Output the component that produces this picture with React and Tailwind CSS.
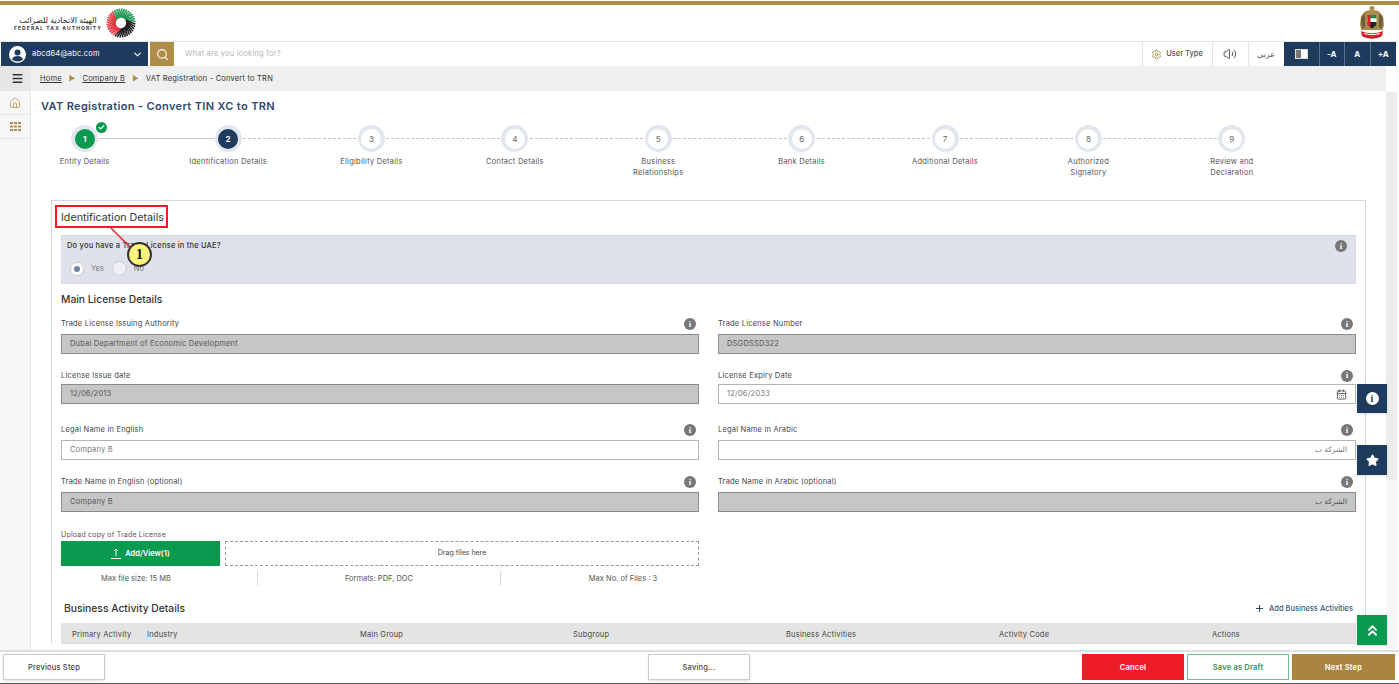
import { Search, ChevronDown, Menu, Home, Volume2, Star, ChevronsUp, Plus, CalendarDays, Check, Settings } from 'lucide-react';

const steps = [
  ['Entity Details'],
  ['Identification Details'],
  ['Eligibility Details'],
  ['Contact Details'],
  ['Business', 'Relationships'],
  ['Bank Details'],
  ['Additional Details'],
  ['Authorized', 'Signatory'],
  ['Review and', 'Declaration']
];

const columns = ['Primary Activity', 'Industry', 'Main Group', 'Subgroup', 'Business Activities', 'Activity Code', 'Actions'];

function InfoDot({ size = 12, className = '' }) {
  return (
    <span
      style={{ width: size, height: size, fontSize: size * 0.72 }}
      className={`flex items-center justify-center rounded-full bg-[#777] font-bold leading-none text-white font-['Liberation_Serif',serif] ${className}`}
    >
      i
    </span>
  );
}

function Logo() {
  // ring of slanted segments, green / black / red
  const seg = [];
  for (let i = 0; i < 36; i++) {
    const a = (i * 10 * Math.PI) / 180;
    const color = i < 9 || i >= 33 ? '#1b1b1b' : i < 21 ? '#e8343f' : '#1f9a55';
    seg.push(
      <line
        key={i}
        x1={15 + 5.5 * Math.cos(a)}
        y1={15 + 5.5 * Math.sin(a)}
        x2={15 + 14.5 * Math.cos(a + 0.6)}
        y2={15 + 14.5 * Math.sin(a + 0.6)}
        stroke={color}
        strokeWidth="1.5"
      />
    );
  }
  return (
    <svg width="30" height="30" viewBox="0 0 30 30">
      {seg}
    </svg>
  );
}

function Emblem() {
  return (
    <svg width="26" height="35" viewBox="0 0 26 35" className="-mt-[2px]">
      <path d="M13 1c1.500 0 2.500.8 2.800 2L14.500 5l5 1 4.500 5 1 9-1.500 5H2.500L1 20l1-9 4.500-5 5-1-1.300-2c.3-1.200 1.300-2 2.800-2z" fill="#a98c4b" />
      <path d="M2 13l4-5v14l-3 2zM24 13l-4-5v14l3 2z" fill="#6f5f3a" />
      <path d="M8.500 10h9v10l-4.500 4-4.500-4z" fill="#fff" />
      <path d="M8.500 10h9v3.300h-9z" fill="#1f8a4c" />
      <path d="M8.500 17h9v3l-4.500 4-4.500-4z" fill="#222" />
      <path d="M8.500 10h3v12.700l-3-2.700z" fill="#d2232a" />
      <path d="M2 26c7 3 15 3 22 0l-1 5c-6 3.500-14 3.500-20 0z" fill="#d2232a" />
      <path d="M5 28.500c5 1.500 11 1.500 16 0" stroke="#fff" strokeWidth="1" fill="none" />
    </svg>
  );
}

function Step({ index, lines }) {
  const n = index + 1;
  return (
    <div className="relative flex w-[143.4px] shrink-0 flex-col items-center">
      {n < 9 && (
        <span
          className={`absolute left-1/2 top-[13px] w-full border-t ${n === 1 ? 'border-solid border-[#c9c9c9]' : 'border-dashed border-[#c4c4c4]'}`}
        />
      )}
      <span className="relative z-10 flex h-[27px] w-[27px] items-center justify-center rounded-full bg-[#e2e7ee]">
        <span
          className={`flex h-[20px] w-[20px] items-center justify-center rounded-full text-[8px] font-bold ${
            n === 1 ? 'bg-[#0a9a4f] text-white' : n === 2 ? 'bg-[#1e3a5c] text-white' : 'bg-white font-normal text-[#666]'
          }`}
        >
          {n}
        </span>
        {n === 1 && (
          <span className="absolute -right-[9px] -top-[3px] flex h-[11px] w-[11px] items-center justify-center rounded-full bg-[#0a9a4f]">
            <Check size={7} strokeWidth={4} className="text-white" />
          </span>
        )}
      </span>
      <div className="mt-[5px] text-center text-[7.5px] leading-[10.500px] tracking-[0.25px] text-[#555]">
        {lines.map(l => (
          <div key={l}>{l}</div>
        ))}
      </div>
    </div>
  );
}

function Field({ label, value, disabled, rtl, icon, labelClass = 'h-[20px]', noInfo }) {
  return (
    <div>
      <div className={`flex items-center justify-between ${labelClass}`}>
        <span className="text-[7.5px] tracking-[0.2px] text-[#444]">{label}</span>
        {!noInfo && <InfoDot className="mr-[3px]" />}
      </div>
      <div
        dir={rtl ? 'rtl' : 'ltr'}
        className={`flex h-[20px] items-center justify-between border px-[8px] text-[7.5px] tracking-[0.2px] ${
          disabled ? 'border-[#8c8c8c] bg-[#c6c6c6] text-[#555]' : 'border-[#b5b5b5] bg-white text-[#777]'
        }`}
      >
        <span>{value}</span>
        {icon && <CalendarDays size={11} className="text-[#555]" />}
      </div>
    </div>
  );
}

export default function App() {
  return (
    <div className="relative flex h-[684px] w-[1399px] flex-col overflow-hidden bg-white font-['Inter','DejaVu_Sans',sans-serif]">
      {/* ------------- header ------------- */}
      <div className="mt-[1px] h-[4px] bg-[#ae8d4a]" />
      <header className="flex h-[36px] items-center justify-between pl-[13px] pr-[14px]">
        <div className="flex items-center gap-[3px]">
          <div className="w-[90px] text-center">
            <div className="text-[8px] leading-[10px] text-[#222]">الهيئة الاتحادية للضرائب</div>
            <div className="whitespace-nowrap text-[5px] font-bold leading-[7px] tracking-[1.1px] text-[#333]">FEDERAL TAX AUTHORITY</div>
          </div>
          <Logo />
        </div>
        <Emblem />
      </header>

      {/* ------------- nav ------------- */}
      <nav className="flex h-[25px] border-t border-[#e5e5e5] pl-[1px] pr-[3px]">
        <div className="flex w-[147px] items-center bg-[#1e3a5c] pl-[8px] pr-[5px] text-white">
          <svg width="17" height="17" viewBox="0 0 17 17" className="shrink-0">
            <circle cx="8.500" cy="8.500" r="8.500" fill="#fff" />
            <circle cx="8.500" cy="6.500" r="3" fill="#1e3a5c" />
            <path d="M3 13.500c1-3 3-3.500 5.500-3.500s4.500.5 5.500 3.500c-3 2.500-8 2.500-11 0z" fill="#1e3a5c" />
          </svg>
          <span className="ml-[6px] flex-1 text-[7.5px] tracking-[0.2px]">abcd64@abc.com</span>
          <ChevronDown size={11} strokeWidth={2.500} />
        </div>
        <div className="ml-[2px] flex w-[24px] items-center justify-center bg-[#ae8d4a]">
          <Search size={13} className="text-white" />
        </div>
        <div className="flex flex-1 items-center pl-[11px] text-[7.5px] tracking-[0.2px] text-[#b5b5b5]">What are you looking for?</div>
        <div className="flex w-[71px] items-center justify-center gap-[4px] border-x border-[#e2e2e2] text-[7.5px] font-medium text-[#555]">
          <Settings size={11} className="text-[#ae8d4a]" />
          User Type
        </div>
        <div className="flex w-[36px] items-center justify-center border-r border-[#e2e2e2]">
          <Volume2 size={14} strokeWidth={1.500} className="text-[#444]" />
        </div>
        <div className="flex w-[35px] items-center justify-center text-[8px] text-[#555]">عربي</div>
        <div className="flex w-[36px] items-center justify-center border-r border-[#5d7289] bg-[#1e3a5c]">
          <span className="flex h-[10px] w-[13px] border border-[#ddd]">
            <span className="w-1/2 bg-[#777]" />
            <span className="w-1/2 bg-white" />
          </span>
        </div>
        {['-A', 'A', '+A'].map(t => (
          <div key={t} className="flex w-[25.500px] items-center justify-center border-r border-[#5d7289] bg-[#1e3a5c] text-[8px] font-bold text-white last:border-r-0">
            {t}
          </div>
        ))}
      </nav>

      <div className="flex min-h-0 flex-1">
        {/* ------------- sidebar ------------- */}
        <aside className="flex w-[31px] shrink-0 flex-col border-r border-[#e8e8e8] bg-[#f7f7f7]">
          <div className="flex h-[25px] items-center justify-center bg-[#e6e6e6] pl-[4px]">
            <Menu size={13} strokeWidth={2.500} className="text-[#333]" />
          </div>
          <div className="flex h-[24px] items-center justify-center border-b border-[#e6e6e6]">
            <Home size={12} className="text-[#c2a468]" />
          </div>
          <div className="flex h-[24px] items-center justify-center border-b border-[#e6e6e6]">
            <svg width="11" height="9" viewBox="0 0 11 9" fill="#ae8d4a">
              {[0, 3.500, 7].map(y => [0, 4, 8].map(x => <rect key={`${x}-${y}`} x={x} y={y} width="3" height="2" />))}
            </svg>
          </div>
        </aside>

        <div className="min-w-0 flex-1">
          {/* ------------- breadcrumb ------------- */}
          <div className="flex h-[25px] items-center gap-[7px] bg-[#efefef] pl-[9px] pt-[1px] text-[7.5px] tracking-[0.2px] text-[#333]">
            <span className="underline">Home</span>
            <span className="text-[7px] text-[#ae8d4a]">►</span>
            <span className="underline">Company B</span>
            <span className="text-[7px] text-[#ae8d4a]">►</span>
            <span>VAT Registration - Convert to TRN</span>
          </div>

          <main className="pl-[10px]">
            <h1 className="mt-[8px] text-[11px] font-semibold leading-[14px] tracking-[0.35px] text-[#2d4a6b]">
              VAT Registration - Convert TIN XC to TRN
            </h1>

            <div className="-ml-[28px] mt-[12px] flex">
              {steps.map((lines, i) => (
                <Step key={i} index={i} lines={lines} />
              ))}
            </div>

            {/* ------------- form card ------------- */}
            <section className="ml-[10px] mt-[22px] w-[1315px] border border-b-0 border-[#d9d9d9] px-[9px]">
              <h2 className="mt-[10px] pb-[10px] text-[10.7px] leading-[14px] text-[#333]">Identification Details</h2>

              <div className="flex h-[49px] items-start justify-between border border-[#d5d9e2] bg-[#dfe2ea] pl-[5px] pr-[8px] pt-[4px]">
                <div>
                  <div className="text-[7.5px] font-medium tracking-[0.2px] text-[#333]">Do you have a Trade License in the UAE?</div>
                  <div className="ml-[3px] mt-[10px] flex items-center text-[7.5px] text-[#777]">
                    <span className="flex h-[14px] w-[14px] items-center justify-center rounded-full border border-[#ccc] bg-white">
                      <span className="h-[6px] w-[6px] rounded-full bg-[#6f84a3]" />
                    </span>
                    <span className="ml-[7px]">Yes</span>
                    <span className="ml-[8px] h-[15px] w-[15px] rounded-full border border-[#ccc] bg-[#eef0f4]" />
                    <span className="ml-[7px]">No</span>
                  </div>
                </div>
                <InfoDot />
              </div>

              <h3 className="mt-[9px] text-[10.3px] font-medium leading-[13px] text-[#333]">Main License Details</h3>

              <div className="mt-[8px] grid grid-cols-2 gap-x-[19px]">
                <Field label="Trade License Issuing Authority" value="Dubai Department of Economic Development" disabled />
                <Field label="Trade License Number" value="DSGDSSD322" disabled />
              </div>
              <div className="mt-[10px] grid grid-cols-2 gap-x-[19px]">
                <Field label="License Issue date" value="12/06/2013" disabled noInfo labelClass="h-[20px] pt-[3px]" />
                <Field label="License Expiry Date" value="12/06/2033" icon labelClass="h-[20px] pt-[3px]" />
              </div>
              <div className="mt-[16px] grid grid-cols-2 gap-x-[19px]">
                <Field label="Legal Name in English" value="Company B" />
                <Field label="Legal Name in Arabic" value="الشركة ب" rtl />
              </div>
              <div className="mt-[12px] grid grid-cols-2 gap-x-[19px]">
                <Field label="Trade Name in English (optional)" value="Company B" disabled />
                <Field label="Trade Name in Arabic (optional)" value="الشركة ب" rtl disabled />
              </div>

              {/* upload */}
              <div className="mt-[17px] w-[638px]">
                <div className="pt-[1px] text-[7px] leading-[9px] tracking-[0.2px] text-[#555]">Upload copy of Trade License</div>
                <div className="mt-[2px] flex h-[25px] gap-[5px]">
                  <div className="flex w-[159px] items-center justify-center gap-[4px] bg-[#0a9a4f] text-[7.5px] font-semibold text-white">
                    <svg width="10" height="11" viewBox="0 0 10 11" fill="none" stroke="#fff" strokeWidth="1">
                      <path d="M5 8V1M3 3l2-2 2 2M0 10.500h10" />
                    </svg>
                    Add/View(1)
                  </div>
                  <div className="flex flex-1 items-center justify-center border border-dashed border-[#999] text-[7px] text-[#444]">Drag files here</div>
                </div>
                <div className="mt-[5px] grid h-[15px] grid-cols-[197px_243px_198px] text-[7.5px] text-[#555]">
                  <div className="flex items-center justify-center border-r border-[#d5dbe5] pr-[46px]">Max file size: 15 MB</div>
                  <div className="flex items-center justify-center border-r border-[#d5dbe5]">Formats: PDF, DOC</div>
                  <div className="flex items-center justify-center pl-[46px]">Max No. of Files : 3</div>
                </div>
              </div>

              {/* business activities */}
              <div className="mt-[15px] flex h-[15px] items-center justify-between pl-[3px] pr-[3px]">
                <h3 className="text-[10.3px] font-medium text-[#333]">Business Activity Details</h3>
                <span className="flex items-center gap-[4px] text-[7.5px] font-medium text-[#3c5678]">
                  <Plus size={11} strokeWidth={2} className="text-[#1e3a5c]" />
                  Add Business Activities
                </span>
              </div>
              <div className="mt-[7px] grid h-[21px] grid-cols-[75px_213px_213px_213px_213px_213px_1fr] items-center border-b border-[#d5dbe5] bg-[#e4e4e4] pl-[11px] pt-[3px] text-[7.5px] tracking-[0.2px] text-[#444]">
                {columns.map(c => (
                  <span key={c}>{c}</span>
                ))}
              </div>
            </section>
          </main>
        </div>

        {/* page scrollbar */}
        <div className="w-[13px] shrink-0" />
      </div>

      {/* ------------- footer ------------- */}
      <footer className="absolute bottom-0 left-0 flex h-[34px] w-full items-start border-t-2 border-b border-t-[#dcdfe4] border-b-[#555] bg-white pl-[3px] pr-[4px] pt-[2px] text-[7.5px] font-medium tracking-[0.2px]">
        <button className="h-[26px] w-[102px] border border-[#ccc] bg-white pt-[1px] text-[#444] shadow-sm">Previous Step</button>
        <button className="ml-[543px] h-[26px] w-[102px] border border-[#ccc] bg-white pt-[1px] text-[#444] shadow-sm">Saving...</button>
        <button className="ml-[332px] h-[26px] w-[102px] bg-[#ee1c25] pt-[1px] font-semibold text-white">Cancel</button>
        <button className="ml-[3px] h-[26px] w-[102px] border border-[#6fbf94] bg-white pt-[1px] font-semibold text-[#2f8f5d]">Save as Draft</button>
        <button className="ml-[3px] h-[26px] w-[103px] bg-[#ab853f] pt-[1px] font-semibold text-white">Next Step</button>
      </footer>

      {/* scrollbar thumb */}
      <div className="absolute left-[1386px] top-[92px] h-[388px] w-[11px] bg-[#ececec]" />
      <div className="absolute left-[1386px] top-[480px] h-[170px] w-[11px] bg-[#f7f7f7]" />

      {/* floating buttons */}
      <div className="absolute left-[1357px] top-[384px] flex h-[29px] w-[30px] items-center justify-center bg-[#1e3a5c] shadow">
        <span className="flex h-[13px] w-[13px] items-center justify-center rounded-full bg-white text-[10px] font-bold leading-none text-[#1e3a5c] font-['Liberation_Serif',serif]">i</span>
      </div>
      <div className="absolute left-[1357px] top-[445px] flex h-[30px] w-[30px] items-center justify-center bg-[#1e3a5c] shadow">
        <Star size={13} fill="#fff" className="text-white" />
      </div>
      <div className="absolute left-[1357px] top-[615px] flex h-[30px] w-[30px] items-center justify-center bg-[#0a9a4f] shadow">
        <ChevronsUp size={17} strokeWidth={2.500} className="text-white" />
      </div>

      {/* tutorial callout */}
      <div className="absolute left-[55px] top-[205px] h-[23px] w-[113px] border-2 border-[#ee1c25]" />
      <svg className="absolute left-[105px] top-[226px]" width="40" height="30" viewBox="0 0 40 30">
        <path d="M6 2l22 22" stroke="#ee1c25" strokeWidth="1.500" />
      </svg>
      <div className="absolute left-[127px] top-[242px] flex h-[25px] w-[25px] items-center justify-center rounded-full border-2 border-[#333] bg-[#fdf57c] text-[14px] font-bold text-[#111] font-['Liberation_Serif',serif]">
        1
      </div>
    </div>
  );
}
